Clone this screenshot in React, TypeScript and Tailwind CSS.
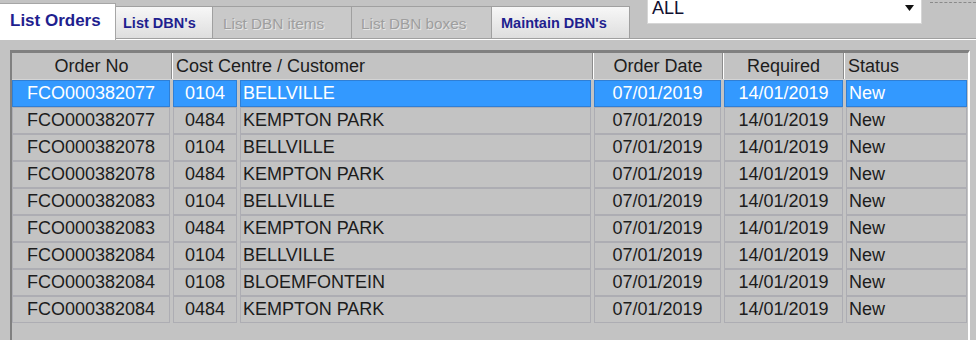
const rows = [
  ['FCO000382077', '0104', 'BELLVILLE'],
  ['FCO000382077', '0484', 'KEMPTON PARK'],
  ['FCO000382078', '0104', 'BELLVILLE'],
  ['FCO000382078', '0484', 'KEMPTON PARK'],
  ['FCO000382083', '0104', 'BELLVILLE'],
  ['FCO000382083', '0484', 'KEMPTON PARK'],
  ['FCO000382084', '0104', 'BELLVILLE'],
  ['FCO000382084', '0108', 'BLOEMFONTEIN'],
  ['FCO000382084', '0484', 'KEMPTON PARK'],
];

function Cell({ w, sel, align, children }: { w: string; sel: boolean; align: 'center' | 'left'; children: React.ReactNode }) {
  return (
    <div
      className={`${w} h-[27px] flex items-center border whitespace-nowrap ${
        align === 'center' ? 'justify-center' : 'justify-start pl-[2px]'
      } ${sel ? 'bg-[#3399ff] border-[#2f7fd6] text-white' : 'border-[#adadb3] text-[#1c1c1c]'}`}
    >
      {children}
    </div>
  );
}

export default function App() {
  return (
    <div className="w-[976px] h-[340px] overflow-hidden bg-[#c3c3c3] font-['Liberation_Sans',Arial,sans-serif]">
      {/* tab strip */}
      <div className="flex items-end h-[38px]">
        <div className="relative z-10 -mb-[2px] h-[37px] w-[116px] bg-white border-t border-r border-[#a6a6a6] pl-[10px] pt-[4px] text-[17px] font-bold text-[#1f1f8f]">
          List Orders
        </div>
        <div className="h-[32px] w-[97px] bg-linear-to-b from-[#f7f7f7] to-[#dedede] border-t border-r border-[#a0a0a0] pl-[7px] pt-[6px] text-[14.5px] font-bold text-[#1f1f8f]">
          List DBN's
        </div>
        <div className="h-[32px] w-[139px] bg-[#c9c9c9] border-t border-r border-[#a0a0a0] pl-[10px] pt-[6px] text-[15.3px] text-[#9e9e9e] [text-shadow:1px_1px_0_#e6e6e6]">
          List DBN items
        </div>
        <div className="h-[32px] w-[140px] bg-[#c9c9c9] border-t border-r border-[#a0a0a0] pl-[9px] pt-[6px] text-[15.3px] text-[#9e9e9e] [text-shadow:1px_1px_0_#e6e6e6]">
          List DBN boxes
        </div>
        <div className="h-[32px] w-[138px] bg-linear-to-b from-[#f7f7f7] to-[#dedede] border-t border-r border-[#a0a0a0] pl-[9px] pt-[6px] text-[14.5px] font-bold text-[#1f1f8f]">
          Maintain DBN's
        </div>
        <div className="self-start ml-[17px] w-[275px] h-[24px] bg-white border-b border-x border-[#d6d6d6] flex items-start justify-between pl-[4px] pr-[7px]">
          <span className="text-[18px] leading-[16px] text-[#101030]">ALL</span>
          <svg width="9" height="6" viewBox="0 0 9 6" className="mt-[5px]">
            <path d="M0 0h9L4.5 6z" fill="#111" />
          </svg>
        </div>
        <div className="self-start mt-[2px] ml-[8px] w-[46px] border-t border-dashed border-[#8a8a8a]" />
      </div>

      {/* panel */}
      <div className="border-t border-[#a0a0a0]">
        <div className="border-t border-white pt-[10px] pl-[10px]">
          <div className="w-[960px] h-[300px] border-l-2 border-t-[3px] border-[#808080] border-r-2 border-r-white text-[18px]">
            <div className="flex h-[27px] text-[#1c1c1c] border-b border-[#d4d4d4]">
              <div className="w-[160px] flex items-center justify-center border-r border-[#8c8c8c]">Order No</div>
              <div className="w-[421px] flex items-center pl-[3px] border-l border-white border-r border-r-[#8c8c8c]">Cost Centre / Customer</div>
              <div className="w-[130px] flex items-center justify-center border-l border-white border-r border-r-[#8c8c8c]">Order Date</div>
              <div className="w-[121px] flex items-center justify-center border-l border-white border-r border-r-[#8c8c8c]">Required</div>
              <div className="w-[123px] flex items-center pl-[3px] border-l border-white">Status</div>
            </div>
            {rows.map((r, i) => {
              const sel = i === 0;
              return (
                <div key={i} className="flex gap-[3px]">
                  <Cell w="w-[158px]" sel={sel} align="center">{r[0]}</Cell>
                  <Cell w="w-[64px]" sel={sel} align="center">{r[1]}</Cell>
                  <Cell w="w-[351px]" sel={sel} align="left">{r[2]}</Cell>
                  <Cell w="w-[127px]" sel={sel} align="center">07/01/2019</Cell>
                  <Cell w="w-[119px]" sel={sel} align="center">14/01/2019</Cell>
                  <Cell w="w-[121px]" sel={sel} align="left">New</Cell>
                </div>
              );
            })}
          </div>
        </div>
      </div>
    </div>
  );
}
